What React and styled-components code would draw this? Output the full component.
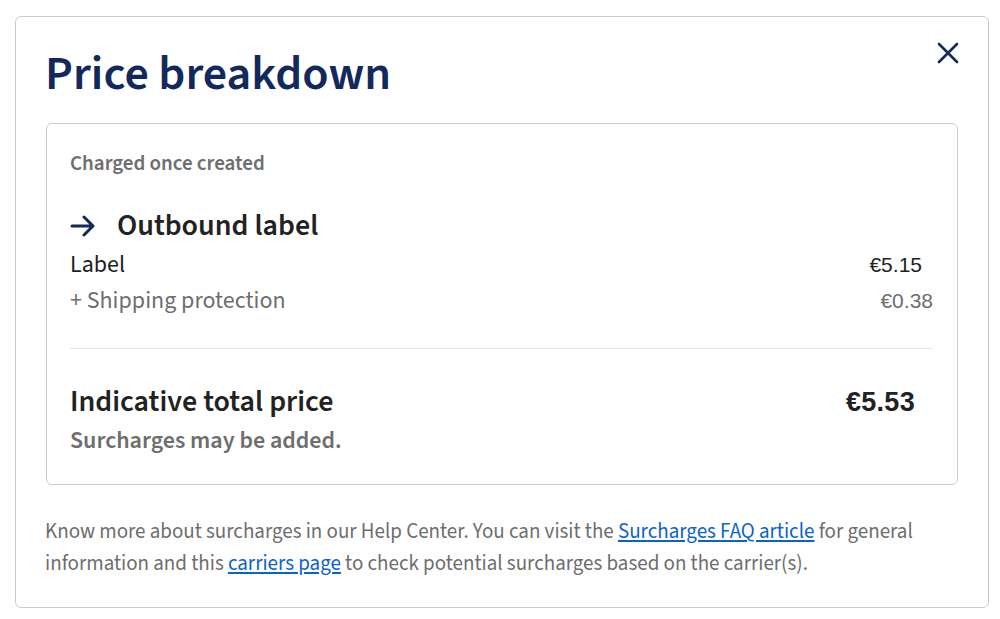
import React from "react";
import styled, { createGlobalStyle } from "styled-components";

const Global = createGlobalStyle`
  html, body { margin: 0; padding: 0; background: #ffffff; }
  body { font-family: "Source Sans 3", "Source Sans Pro", Lato, "Noto Sans", sans-serif; }
  * { box-sizing: border-box; }
`;

const Page = styled.div`
  padding: 16px 11px 11px 15px;
`;

const Modal = styled.div`
  position: relative;
  width: 974px;
  height: 592px;
  border: 1px solid #c9c9d6;
  border-radius: 6px;
  padding: 25px 30px 0 30px;
  display: flex;
  flex-direction: column;
`;

const Title = styled.h1`
  margin: 0 0 0 -1px;
  font-size: 48px;
  line-height: 64px;
  font-weight: 600;
  color: #13295b;
`;

const CloseButton = styled.button`
  position: absolute;
  top: 24px;
  right: 28px;
  width: 24px;
  height: 24px;
  padding: 0;
  border: 0;
  background: none;
  display: flex;
  align-items: center;
  justify-content: center;
  cursor: pointer;
`;

const Card = styled.div`
  margin-top: 17px;
  border: 1px solid #cccccc;
  border-radius: 6px;
  padding: 27px 24px 28px 23px;
  display: flex;
  flex-direction: column;
`;

const Caption = styled.div`
  font-size: 21px;
  line-height: 24px;
  font-weight: 600;
  color: #6e6e6e;
`;

const SectionTitle = styled.div`
  margin: 33px 0 3px 0;
  display: flex;
  align-items: center;
  gap: 21px;
  font-size: 30px;
  line-height: 36px;
  font-weight: 600;
  color: #222222;
`;

const Row = styled.div`
  display: flex;
  justify-content: space-between;
  align-items: baseline;
  font-size: 24px;
  line-height: 36px;
  color: ${(p) => (p.$muted ? "#6e6e6e" : "#222222")};
`;

const Price = styled.span`
  font-family: "Liberation Sans", Arial, sans-serif;
  font-size: ${(p) => (p.$big ? "27px" : "21px")};
  font-weight: ${(p) => (p.$big ? 700 : 400)};
  letter-spacing: ${(p) => (p.$big ? "0.3px" : "0")};
  margin-right: ${(p) => p.$offset || 0}px;
`;

const Divider = styled.hr`
  margin: 29px 0 35px 0;
  border: 0;
  border-top: 1px solid #e3e3e3;
`;

const TotalLabel = styled.span`
  font-size: 30px;
  font-weight: 600;
  color: #222222;
`;

const Note = styled.div`
  margin-top: 6px;
  font-size: 24px;
  line-height: 30px;
  font-weight: 600;
  color: #6e6e6e;
`;

const Help = styled.p`
  margin: 30px 0 0 -1px;
  font-size: 21px;
  line-height: 32px;
  color: #6e6e6e;
`;

const Link = styled.a`
  color: #0b63c8;
  text-decoration: underline;
`;

export default function App() {
  return (
    <>
      <Global />
      <Page>
        <Modal>
          <Title>Price breakdown</Title>
          <CloseButton aria-label="Close">
            <svg width="22" height="22" viewBox="0 0 22 22" fill="none" stroke="#13295b" strokeWidth="2.6" strokeLinecap="round">
              <path d="M2 2 L20 20 M20 2 L2 20" />
            </svg>
          </CloseButton>
          <Card>
            <Caption>Charged once created</Caption>
            <SectionTitle>
              <svg width="26" height="22" viewBox="0 0 26 22" fill="none" stroke="#13295b" strokeWidth="3" strokeLinecap="round" strokeLinejoin="round">
                <path d="M2 11 H23 M14 2 L23 11 L14 20" />
              </svg>
              Outbound label
            </SectionTitle>
            <Row>
              <span>Label</span>
              <Price $offset={11}>€5.15</Price>
            </Row>
            <Row $muted>
              <span>+ Shipping protection</span>
              <Price>€0.38</Price>
            </Row>
            <Divider />
            <Row>
              <TotalLabel>Indicative total price</TotalLabel>
              <Price $big $offset={18}>€5.53</Price>
            </Row>
            <Note>Surcharges may be added.</Note>
          </Card>
          <Help>
            Know more about surcharges in our Help Center. You can visit the{" "}
            <Link href="#">Surcharges FAQ article</Link> for general information and this{" "}
            <Link href="#">carriers page</Link> to check potential surcharges based on the carrier(s).
          </Help>
        </Modal>
      </Page>
    </>
  );
}
